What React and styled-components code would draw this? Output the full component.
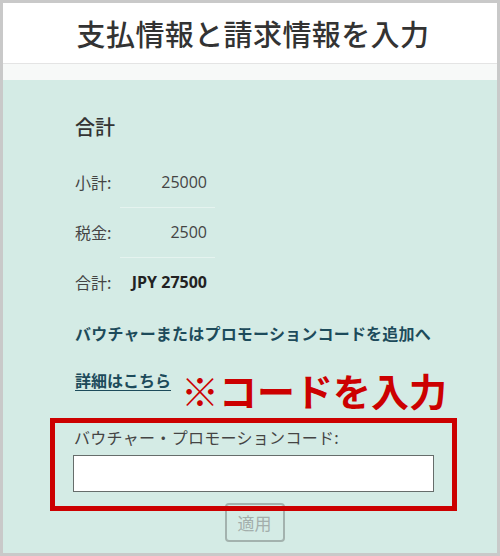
import React from "react"
import styled, { createGlobalStyle } from "styled-components"

const GlobalStyle = createGlobalStyle`
  html, body {
    margin: 0;
    padding: 0;
    background: #ffffff;
  }
  * {
    box-sizing: border-box;
  }
`

const Frame = styled.div`
  width: 500px;
  height: 556px;
  border: 3px solid #c9c9c9;
  display: flex;
  flex-direction: column;
  overflow: hidden;
  font-family: "Open Sans", "Noto Sans CJK JP", sans-serif;
`

const Header = styled.header`
  height: 61px;
  flex-shrink: 0;
  background: #ffffff;
  border-bottom: 1px solid #e4e4e4;
  display: flex;
  align-items: center;
  justify-content: center;

  h1 {
    margin: 0;
    font-family: "Noto Sans CJK JP", sans-serif;
    font-size: 29px;
    font-weight: 500;
    color: #333333;
    letter-spacing: 0.4px;
    padding-left: 6px;
  }
`

const Strip = styled.div`
  height: 16px;
  flex-shrink: 0;
  background: #f7f9f8;
`

const Body = styled.main`
  flex: 1;
  background: #d4ebe5;
  padding: 33px 0 0 72px;
`

const Heading = styled.h2`
  margin: 0 0 16px;
  font-family: "Noto Sans CJK JP", sans-serif;
  font-size: 20px;
  line-height: 28px;
  font-weight: 500;
  color: #333333;
`

const Table = styled.table`
  border-collapse: collapse;
  margin-bottom: 15px;
`

const Row = styled.tr`
  height: 50px;
`

const Label = styled.td`
  width: 45px;
  padding: 0;
  font-family: "Noto Sans CJK JP", sans-serif;
  font-size: 16px;
  color: #444444;
  vertical-align: middle;
`

const Value = styled.td`
  width: 95px;
  padding: 0 8px 0 0;
  text-align: right;
  font-family: "Open Sans", sans-serif;
  font-size: 16px;
  font-weight: ${({ $strong }) => ($strong ? 700 : 400)};
  color: ${({ $strong }) => ($strong ? "#222222" : "#444444")};
  border-bottom: ${({ $last }) =>
    $last ? "none" : "1px solid rgba(255, 255, 255, 0.4)"};
  vertical-align: middle;
`

const Link = styled.a`
  display: block;
  font-family: "Noto Sans CJK JP", sans-serif;
  font-size: 16px;
  line-height: 22px;
  font-weight: 700;
  color: #1d4b5b;
  letter-spacing: ${({ $underline }) => ($underline ? "0" : "0.2px")};
  text-decoration: ${({ $underline }) => ($underline ? "underline" : "none")};
  text-underline-offset: 3px;
`

const LinkRow = styled.div`
  display: flex;
  align-items: flex-start;
  gap: 10px;
  margin-top: 25px;
`

const Note = styled.span`
  margin-top: 1px;
  font-family: "Noto Sans CJK JP", sans-serif;
  font-size: 38px;
  line-height: 40px;
  font-weight: 700;
  color: #cc0000;
`

const Voucher = styled.div`
  position: relative;
  width: 361px;
  margin-top: 16px;
  margin-left: -1px;
`

const Highlight = styled.div`
  position: absolute;
  top: -8px;
  left: -24px;
  width: 407px;
  height: 93px;
  border: 5px solid #cc0000;
  pointer-events: none;
`

const FieldLabel = styled.label`
  display: block;
  font-family: "Noto Sans CJK JP", sans-serif;
  font-size: 16px;
  line-height: 22px;
  letter-spacing: 0.3px;
  color: #444444;
  margin-bottom: 7px;
`

const Input = styled.input`
  display: block;
  width: 361px;
  height: 37px;
  margin-left: -1px;
  border: 1px solid #666d6b;
  background: #ffffff;
  outline: none;
`

const Actions = styled.div`
  display: flex;
  justify-content: center;
  margin-top: 11px;
`

const Button = styled.button`
  width: 60px;
  height: 39px;
  border: 2px solid #a3b2ae;
  border-radius: 4px;
  background: transparent;
  font-family: "Noto Sans CJK JP", sans-serif;
  font-size: 17px;
  color: #a3aeab;
`

export default function App() {
  return (
    <>
      <GlobalStyle />
      <Frame>
        <Header>
          <h1>支払情報と請求情報を入力</h1>
        </Header>
        <Strip />
        <Body>
          <Heading>合計</Heading>
          <Table>
            <tbody>
              <Row>
                <Label>小計:</Label>
                <Value>25000</Value>
              </Row>
              <Row>
                <Label>税金:</Label>
                <Value>2500</Value>
              </Row>
              <Row>
                <Label>合計:</Label>
                <Value $strong $last>
                  JPY 27500
                </Value>
              </Row>
            </tbody>
          </Table>
          <Link href='#'>バウチャーまたはプロモーションコードを追加へ</Link>
          <LinkRow>
            <Link href='#' $underline>
              詳細はこちら
            </Link>
            <Note>※コードを入力</Note>
          </LinkRow>
          <Voucher>
            <FieldLabel>バウチャー・プロモーションコード:</FieldLabel>
            <Input type='text' />
            <Highlight />
            <Actions>
              <Button disabled>適用</Button>
            </Actions>
          </Voucher>
        </Body>
      </Frame>
    </>
  )
}
